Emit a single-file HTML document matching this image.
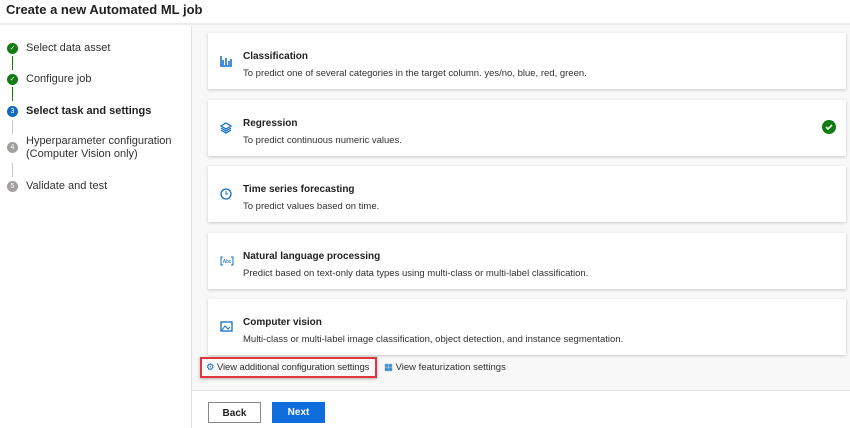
<!DOCTYPE html><html><head><style>
body{margin:0;width:850px;height:428px;overflow:hidden;font-family:"Liberation Sans",sans-serif;background:#fff;position:relative;color:#201f1e}
.hdr{position:absolute;left:0;top:0;width:850px;height:25px;border-bottom:2px solid #ececec;font-size:13px;font-weight:bold;padding-left:6px;padding-top:2px;line-height:16px;box-sizing:border-box}
.left{position:absolute;left:0;top:26px;width:191px;height:402px;border-right:1px solid #e1e1e1;background:#fff}
.step{position:absolute;left:26px;font-size:11px;color:#323130}
.dot{position:absolute;left:7px;width:11px;height:11px;border-radius:50%;color:#fff;font-size:7px;text-align:center;line-height:11px}
.vl{position:absolute;left:12px;width:1px}
.right{position:absolute;left:192px;top:25px;width:658px;height:365px;background:#f8f8f8}
.card{position:absolute;left:208px;width:638px;height:56px;background:#fff;box-shadow:0 1px 3px rgba(0,0,0,.2)}
.card b{position:absolute;left:35px;top:18px;font-size:10px}
.card span{position:absolute;left:35px;top:35px;font-size:9.5px;color:#323130}
.card svg{position:absolute;left:12px;top:22px}
.btn{position:absolute;top:402px;height:21px;font-size:10px;font-weight:bold;text-align:center;line-height:21px;box-sizing:border-box}
</style></head><body>
<div class="hdr">Create a new Automated ML job</div>
<div class="left">
<div class="dot" style="top:17px;background:#107c10">✓</div><div class="step" style="top:16px">Select data asset</div>
<div class="vl" style="top:30px;height:14px;background:#107c10"></div>
<div class="dot" style="top:48px;background:#107c10">✓</div><div class="step" style="top:47px">Configure job</div>
<div class="vl" style="top:61px;height:14px;background:#107c10"></div>
<div class="dot" style="top:80px;background:#0f6cbd">3</div><div class="step" style="top:79px;font-weight:bold;color:#201f1e">Select task and settings</div>
<div class="vl" style="top:94px;height:14px;background:#c8c8c8"></div>
<div class="dot" style="top:116px;background:#a19f9d">4</div><div class="step" style="top:109px;line-height:13px">Hyperparameter configuration<br>(Computer Vision only)</div>
<div class="vl" style="top:137px;height:14px;background:#c8c8c8"></div>
<div class="dot" style="top:155px;background:#a19f9d">5</div><div class="step" style="top:154px">Validate and test</div>
</div>
<div class="right"></div>
<div class="card" style="top:33px"><svg width="12" height="12"><path d="M1 1v10h11M3 5v5M6 3v7M9 6v4M11 4v6" stroke="#0f6cbd" stroke-width="1.5" fill="none"/></svg><b>Classification</b><span>To predict one of several categories in the target column. yes/no, blue, red, green.</span></div>
<div class="card" style="top:100px"><svg width="12" height="12"><path d="M6 1l5 3-5 3-5-3zM1 6l5 3 5-3M1 8l5 3 5-3" stroke="#0f6cbd" stroke-width="1.2" fill="none"/></svg><b>Regression</b><span>To predict continuous numeric values.</span><svg style="left:614px;top:20px" width="14" height="14"><circle cx="7" cy="7" r="7" fill="#107c10"/><path d="M4 7l2 2 4-4" stroke="#fff" stroke-width="1.6" fill="none"/></svg></div>
<div class="card" style="top:166px"><svg width="12" height="12"><circle cx="6" cy="6" r="5" stroke="#0f6cbd" stroke-width="1.3" fill="none"/><path d="M6 3v3h2" stroke="#0f6cbd" fill="none"/></svg><b>Time series forecasting</b><span>To predict values based on time.</span></div>
<div class="card" style="top:233px"><svg width="14" height="12"><path d="M3 2H1v8h2M11 2h2v8h-2" stroke="#0f6cbd" fill="none"/><text x="7" y="8" font-size="5" fill="#0f6cbd" text-anchor="middle">Abc</text></svg><b>Natural language processing</b><span>Predict based on text-only data types using multi-class or multi-label classification.</span></div>
<div class="card" style="top:299px"><svg width="13" height="12"><rect x="1" y="1" width="11" height="9" stroke="#0f6cbd" stroke-width="1.3" fill="none"/><path d="M2 9l3-4 3 3 2-2" stroke="#0f6cbd" fill="none"/></svg><b>Computer vision</b><span>Multi-class or multi-label image classification, object detection, and instance segmentation.</span></div>
<div style="position:absolute;left:200px;top:357px;width:177px;height:21px;border:2px solid #e0373d;box-sizing:border-box;box-shadow:0 1px 3px rgba(0,0,0,.3)"></div>
<div style="position:absolute;left:206px;top:362px;font-size:9.5px;color:#323130;letter-spacing:-0.1px"><span style="color:#0f6cbd">⚙</span> View additional configuration settings</div>
<div style="position:absolute;left:384px;top:362px;font-size:9.5px;color:#323130"><span style="color:#0f6cbd">▦</span> View featurization settings</div>
<div style="position:absolute;left:192px;top:390px;width:658px;height:1px;background:#e1e1e1"></div>
<div class="btn" style="left:208px;width:53px;border:1px solid #8a8886;background:#fff">Back</div>
<div class="btn" style="left:272px;width:53px;background:#0f6cdd;color:#fff">Next</div>
</body></html>
